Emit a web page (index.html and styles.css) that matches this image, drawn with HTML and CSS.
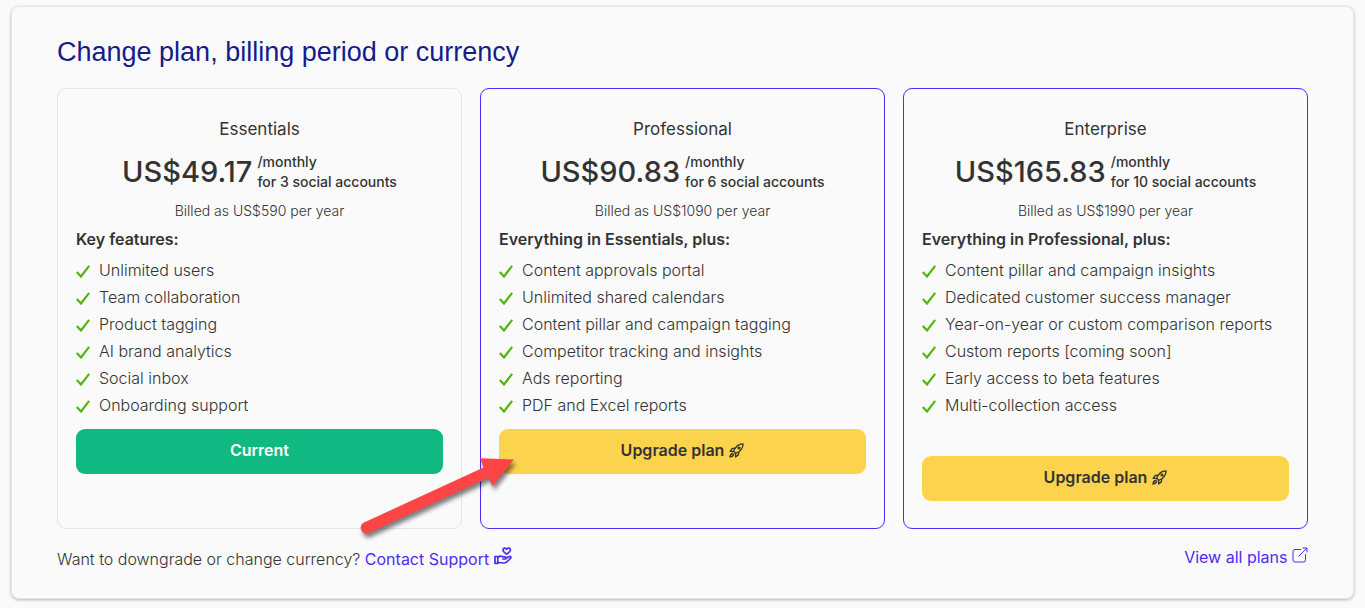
FILE: index.html
```html
<!DOCTYPE html>
<html lang="en">
<head>
<meta charset="utf-8">
<title>Change plan</title>
<link rel="stylesheet" href="styles.css">
</head>
<body>
<svg class="sprite" aria-hidden="true">
  <symbol id="check" viewBox="0 0 14 14"><path d="M.8 8l4.200 4.500L13.200 1.800" fill="none" stroke="currentColor" stroke-width="2.200"/></symbol>
  <symbol id="rocket" viewBox="0 0 16 16"><g fill="none" stroke="currentColor" stroke-width="1.400" stroke-linejoin="round" stroke-linecap="round"><path d="M5 9C6.500 4.500 9.500 1.200 15 1c-.2 5.500-3.500 8.500-8 10z"/><path d="M6.300 5.600L3.300 6 1.200 9 5 9M10.400 9.700L10 12.700 7 14.800 7 11"/><circle cx="10.700" cy="5.300" r="1"/><path d="M3.800 11.200c-1.800.2-2.500 1.500-2.800 3.800 2.300-.3 3.600-1 3.800-2.800z"/></g></symbol>
  <symbol id="care" viewBox="0 0 18 18"><g fill="none" stroke="currentColor" stroke-width="1.700" stroke-linejoin="round" stroke-linecap="round"><path d="M12.500 7.200C10.500 5.800 9 4.600 9 3 9 .8 11.700.5 12.500 2.300 13.300.5 16.500.8 16.500 3c0 1.600-2 2.800-4 4.200z"/><path d="M1 9.500h2.800v6.800H1z"/><path d="M3.800 10.300C5.500 8.800 7.500 9 8.800 9.800h2.400c1.300 0 1.300 2.200 0 2.200H8.800M11.800 11.600l3.500-2c1.400-.6 2.200.8 1.200 1.700-2 2-3.500 4.500-6 4.700L3.800 15.500"/></g></symbol>
  <symbol id="external" viewBox="0 0 16 16"><path d="M9 2.500H3Q1 2.500 1 4.500V13q0 2 2 2h8.500q2 0 2-2V7M6.500 9.500L15 1M10.500 1H15v4.500" fill="none" stroke="currentColor"/></symbol>
</svg>
<main class="panel">
  <h1 class="title">Change plan, billing period or currency</h1>
  <div class="plans">
    <section class="plan">
      <h2 class="plan-name">Essentials</h2>
      <div class="price"><span class="amount">US$49.17</span><span class="terms">/monthly<br>for 3 social accounts</span></div>
      <p class="billed">Billed as US$590 per year</p>
      <h3 class="lead">Key features:</h3>
      <ul class="features">
        <li><svg><use href="#check"/></svg>Unlimited users</li>
        <li><svg><use href="#check"/></svg>Team collaboration</li>
        <li><svg><use href="#check"/></svg>Product tagging</li>
        <li><svg><use href="#check"/></svg>AI brand analytics</li>
        <li><svg><use href="#check"/></svg>Social inbox</li>
        <li><svg><use href="#check"/></svg>Onboarding support</li>
      </ul>
      <button class="action action-current" type="button">Current</button>
    </section>
    <section class="plan plan-available">
      <h2 class="plan-name">Professional</h2>
      <div class="price"><span class="amount">US$90.83</span><span class="terms">/monthly<br>for 6 social accounts</span></div>
      <p class="billed">Billed as US$1090 per year</p>
      <h3 class="lead">Everything in Essentials, plus:</h3>
      <ul class="features">
        <li><svg><use href="#check"/></svg>Content approvals portal</li>
        <li><svg><use href="#check"/></svg>Unlimited shared calendars</li>
        <li><svg><use href="#check"/></svg>Content pillar and campaign tagging</li>
        <li><svg><use href="#check"/></svg>Competitor tracking and insights</li>
        <li><svg><use href="#check"/></svg>Ads reporting</li>
        <li><svg><use href="#check"/></svg>PDF and Excel reports</li>
      </ul>
      <div class="action-slot">
        <button class="action" type="button">Upgrade plan <svg><use href="#rocket"/></svg></button>
        <svg class="pointer" viewBox="0 0 160 90" aria-hidden="true"><path d="M4 75.500L123.500 20.500 120 11.300 154 12.500 132.500 39 128.500 30.500 9 86A5.600 5.600 0 0 1 4 75.500z" fill="#fe4545"/></svg>
      </div>
    </section>
    <section class="plan plan-available">
      <h2 class="plan-name">Enterprise</h2>
      <div class="price"><span class="amount">US$165.83</span><span class="terms">/monthly<br>for 10 social accounts</span></div>
      <p class="billed">Billed as US$1990 per year</p>
      <h3 class="lead">Everything in Professional, plus:</h3>
      <ul class="features features-long">
        <li><svg><use href="#check"/></svg>Content pillar and campaign insights</li>
        <li><svg><use href="#check"/></svg>Dedicated customer success manager</li>
        <li><svg><use href="#check"/></svg>Year-on-year or custom comparison reports</li>
        <li><svg><use href="#check"/></svg>Custom reports [coming soon]</li>
        <li><svg><use href="#check"/></svg>Early access to beta features</li>
        <li><svg><use href="#check"/></svg>Multi-collection access</li>
      </ul>
      <button class="action" type="button">Upgrade plan <svg><use href="#rocket"/></svg></button>
    </section>
  </div>
  <footer class="links">
    <p class="help">Want to downgrade or change currency? <a class="link" href="#support">Contact Support <svg class="care"><use href="#care"/></svg></a></p>
    <a class="link" href="#plans">View all plans <svg class="external"><use href="#external"/></svg></a>
  </footer>
</main>
</body>
</html>
```
FILE: styles.css
```css
* { box-sizing: border-box; }
body {
  margin: 0;
  padding: 6px 11px 8px;
  background: #fafafa;
  color: #333;
  font: 300 16px/27px Inter, "Liberation Sans", sans-serif;
}
h1, h2, h3, p, ul { margin: 0; padding: 0; }
.sprite { display: none; }
.panel {
  padding: 26px 45px 25px;
  border: 1px solid #e5e5e8;
  border-radius: 8px;
  box-shadow: 0 1px 3px rgba(0, 0, 30, 0.3);
}
.title {
  margin-bottom: 17px;
  color: #141c8c;
  font: 400 27px/38px "Liberation Sans", sans-serif;
}
.plans {
  display: grid;
  grid-template-columns: repeat(3, 1fr);
  gap: 18px;
}
.plan {
  padding: 27px 18px;
  border: 1px solid #e5e5e5;
  border-radius: 9px;
}
.plan-available { border-color: #4f2bf5; }
.plan-name {
  font: 400 17px/27px Inter, sans-serif;
  text-align: center;
}
.price {
  display: flex;
  justify-content: center;
  align-items: center;
  gap: 5px;
  margin-top: 9px;
}
.amount { font: 500 29px/40px Inter, sans-serif; }
.terms { font-size: 14px; font-weight: 500; line-height: 20px; }
.billed { margin: 5px 0 2px; font-size: 14px; text-align: center; }
.lead { font-size: 16px; font-weight: 600; line-height: 27px; }
.features { margin: 4px 0 10px; list-style: none; }
.features-long { padding-bottom: 27px; }
.features li { display: flex; align-items: center; gap: 9px; }
.features svg { width: 14px; height: 14px; color: #52b50c; }
.action {
  display: flex;
  justify-content: center;
  align-items: center;
  gap: 5px;
  width: 100%;
  height: 45px;
  padding: 0 6px 2px;
  border: 0;
  border-radius: 9px;
  background: #fcd34d;
  color: #333;
  font: 600 16px/27px Inter, sans-serif;
}
.action svg { width: 15px; height: 15px; }
.action-current { background: #10b981; color: #fff; }
.action-slot { position: relative; }
.pointer {
  position: absolute;
  left: -139px;
  top: 18px;
  width: 160px;
  height: 90px;
  filter: drop-shadow(2px 4px 2px rgba(0, 0, 0, 0.5));
}
.links {
  display: flex;
  justify-content: space-between;
  align-items: start;
  margin-top: 15px;
}
.help { padding-top: 2px; }
.link { color: #4f2bf5; font-weight: 400; text-decoration: none; }
.care { width: 18px; height: 18px; }
.external { width: 16px; height: 16px; }
```
